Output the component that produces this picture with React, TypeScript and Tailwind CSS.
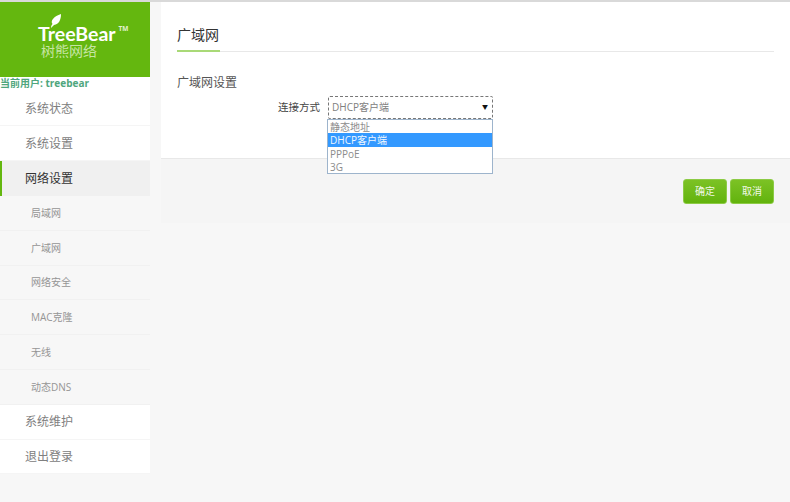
const cjk = "font-['Open_Sans','Noto_Sans_CJK_SC',sans-serif]";

const subItems = ["局域网", "广域网", "网络安全", "MAC克隆", "无线", "动态DNS"];

function TopRow({ label, h = "h-[35px] pt-[1px]" }: { label: string; h?: string }) {
  return (
    <div className={`${h} bg-white border-b border-[#f5f5f5] pl-[25px] flex items-center text-[12px] text-[#808080]`}>
      {label}
    </div>
  );
}

export default function App() {
  return (
    <div className={`w-[790px] h-[502px] overflow-hidden bg-[#f7f7f7] flex flex-col ${cjk}`}>
      <div className="h-[2px] bg-[#d9d9d9] shrink-0" />
      <div className="flex flex-1 min-h-0">
        <aside className="w-[150px] shrink-0 flex flex-col">
          <div className="h-[75px] bg-[#64b70f] flex flex-col pl-[38px] relative">
            <svg className="absolute left-[50px] top-[12px]" width="12" height="14" viewBox="0 0 12 14">
              <path d="M11 0C11 6 9 10 4 11 L1 14 C1 12 1.5 11 2.5 10 C0 7 4 2 11 0Z" fill="#ffffff" />
            </svg>
            <div className="flex items-start text-white leading-none mt-[23px]">
              <span className="text-[19.5px] font-['Lato',sans-serif] font-bold leading-[18px]">TreeBear</span>
              <span className="text-[6.5px] font-bold ml-[3px] mt-[1px] text-[#e3f2d0]">TM</span>
            </div>
            <div className="ml-[3px] text-[14px] leading-[15px] text-[#c6e5a3]">树熊网络</div>
          </div>
          <div className="h-[14px] bg-white text-[10px] leading-[13px] font-bold text-[#4fa67d] whitespace-nowrap">
            当前用户: treebear
          </div>
          <TopRow label="系统状态" />
          <TopRow label="系统设置" />
          <div className="h-[35px] bg-[#f0f0f0] border-l-2 border-[#64b70f] pl-[23px] flex items-center text-[12px] text-[#333333]">
            网络设置
          </div>
          {subItems.map((s) => (
            <div
              key={s}
              className="h-[34.8px] pt-[1px] border-b border-[#f1f1f1] pl-[31px] flex items-center text-[10px] text-[#959595] last:border-b-0"
            >
              {s}
            </div>
          ))}
          <TopRow label="系统维护" />
          <TopRow label="退出登录" h="h-[34px] pt-[2px]" />
        </aside>

        <main className="ml-[11px] flex-1 min-w-0 flex flex-col">
          <section className="h-[157px] bg-white shrink-0 pl-[16px] pr-[16px] pt-[23px] border-b border-[#e8e8e8]">
            <div className="border-b border-[#e8e8e8] h-[27px] relative">
              <span className="text-[14px] leading-[20px] text-[#333333] block">广域网</span>
              <div className="absolute left-0 bottom-[-1px] w-[43px] h-[2px] bg-[#a9d977]" />
            </div>
            <div className="mt-[23px] text-[12px] leading-[16px] text-[#555555]">广域网设置</div>
            <div className="mt-[5px] flex items-center relative">
              <span className="w-[143px] text-right text-[10.5px] text-[#444444]">连接方式</span>
              <div className="ml-[8px] w-[165px] h-[23px] border border-dashed border-[#777777] rounded-[2px] flex items-center pl-[3px] pr-[4px] text-[10px] text-[#808080]">
                <span className="flex-1">DHCP客户端</span>
                <span className="text-[#111111] text-[6px]">▼</span>
              </div>
              <div className="absolute left-[150px] top-[23px] w-[166px] h-[55px] border border-[#9db4cc] bg-white text-[10px] leading-[14px] text-[#8c8c8c] flex flex-col">
                <div className="h-[13px] pl-[2px]">静态地址</div>
                <div className="h-[14px] pl-[2px] bg-[#3399ff] text-[#f0f7ff]">DHCP客户端</div>
                <div className="h-[13px] pl-[2px]">PPPoE</div>
                <div className="h-[13px] pl-[2px]">3G</div>
              </div>
            </div>
          </section>
          <section className="h-[64px] bg-[#f5f5f5] flex justify-end items-start gap-[3px] pr-[16px] pt-[20px]">
            <button className="w-[44px] h-[25px] rounded-[3px] bg-gradient-to-b from-[#7cc224] to-[#62b30c] border border-[#8ccb45] text-[#f2f9e8] text-[10px]">
              确定
            </button>
            <button className="w-[44px] h-[25px] rounded-[3px] bg-gradient-to-b from-[#7cc224] to-[#62b30c] border border-[#8ccb45] text-[#f2f9e8] text-[10px]">
              取消
            </button>
          </section>
        </main>
      </div>
    </div>
  );
}
